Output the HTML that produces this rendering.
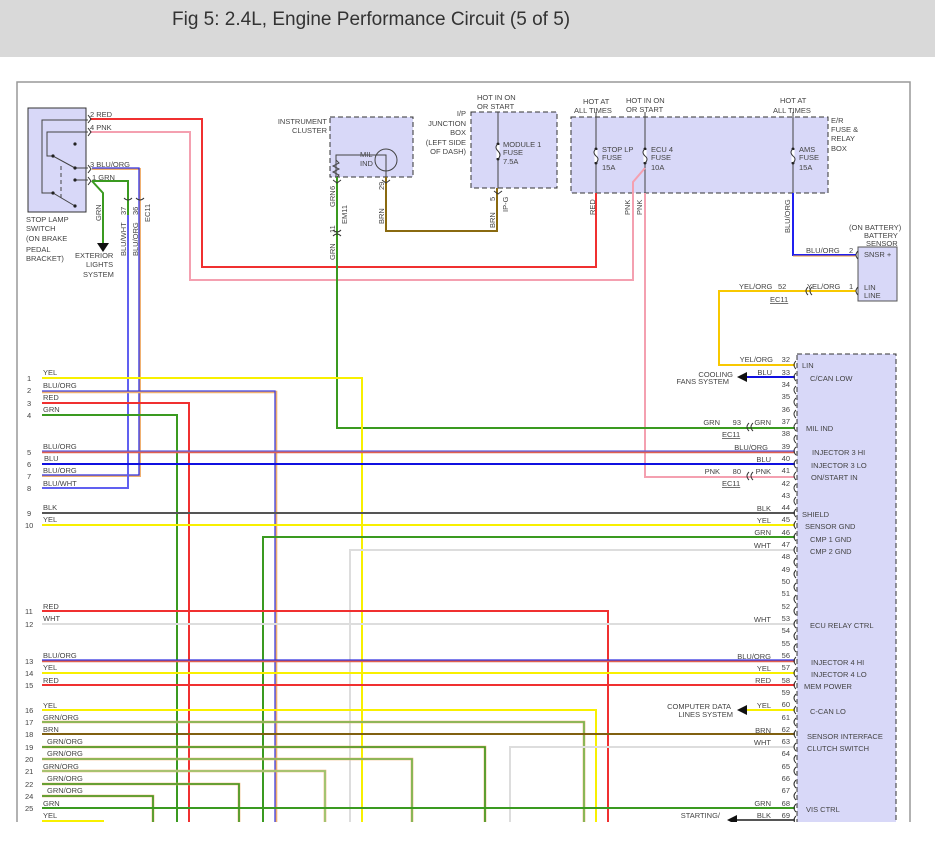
<!DOCTYPE html>
<html><head><meta charset="utf-8"><style>
html,body{margin:0;padding:0;background:#fff;width:935px;height:844px;overflow:hidden}
.hdr{position:absolute;left:0;top:0;width:935px;height:57px;background:#d9d9d9}
.hdr span{position:absolute;left:172px;top:9px;font:19px "Liberation Sans",sans-serif;color:#333}
svg{position:absolute;left:0;top:0}
text{font-family:"Liberation Sans",sans-serif;font-size:7.5px;fill:#444}
.r{text-anchor:end}
</style></head><body>
<div class="hdr"><span>Fig 5: 2.4L, Engine Performance Circuit (5 of 5)</span></div>
<svg width="935" height="844" viewBox="0 0 935 844">
<defs><clipPath id="c"><rect x="0" y="57" width="935" height="765"/></clipPath></defs>
<g clip-path="url(#c)">
<path d="M17,840 V82 H910 V840" fill="none" stroke="#999" stroke-width="1.5"/>
<rect x="28" y="108" width="58" height="104" fill="#d8d8f8" stroke="#333"/>
<rect x="330" y="117" width="83" height="60" fill="#d8d8f8" stroke="#333" stroke-dasharray="5,3"/>
<rect x="471" y="112" width="86" height="76" fill="#d8d8f8" stroke="#333" stroke-dasharray="5,3"/>
<rect x="571" y="117" width="257" height="76" fill="#d8d8f8" stroke="#333" stroke-dasharray="5,3"/>
<rect x="858" y="247" width="39" height="54" fill="#d8d8f8" stroke="#555"/>
<rect x="797" y="354" width="99" height="480" fill="#d8d8f8" stroke="#333" stroke-dasharray="5,3"/>
<g fill="none" stroke="#444" stroke-width="1">
<path d="M88,120 H42 V193 H53 L75,206"/><path d="M88,132 H47 V156 H53 L75,168"/>
<path d="M61,166 V200" stroke-dasharray="4,3"/>
<path d="M76,180 H88"/><path d="M76,168 H88"/>
<path d="M336,177 V155 H386 V177"/><path d="M336,160 l3,3 -6,3 6,3 -6,3 6,3 -3,3"/>
<circle cx="386" cy="160" r="11"/>
<path d="M498,112 V188 M596,112 V193 M645,112 V193 M793,112 V193"/>
</g>
<g fill="#222"><circle cx="75" cy="144" r="1.6"/><circle cx="53" cy="156" r="1.6"/><circle cx="75" cy="168" r="1.6"/><circle cx="75" cy="180" r="1.6"/><circle cx="53" cy="193" r="1.6"/><circle cx="75" cy="206" r="1.6"/>
<circle cx="596" cy="149" r="1.5"/><circle cx="596" cy="163" r="1.5"/><circle cx="645" cy="149" r="1.5"/><circle cx="645" cy="163" r="1.5"/><circle cx="793" cy="149" r="1.5"/><circle cx="793" cy="163" r="1.5"/><circle cx="498" cy="144" r="1.5"/><circle cx="498" cy="159" r="1.5"/></g>
<g fill="none" stroke="#fff" stroke-width="3"><path d="M596,150 V162 M645,150 V162 M793,150 V162 M498,145 V158"/></g>
<g fill="none" stroke="#333" stroke-width="1"><path d="M596,149 q-4,3 0,7 q4,3 0,7 M645,149 q-4,3 0,7 q4,3 0,7 M793,149 q-4,3 0,7 q4,3 0,7 M498,144 q-4,3 0,7 q4,4 0,8"/></g>
<g fill="none" stroke-width="2">
<path d="M90,119 H202 V267 H596 V193" stroke="#f03030"/>
<path d="M90,132 H190 V280 H633 V182 L645,168" stroke="#f4a0b0"/>
<path d="M645,193 V477 H795" stroke="#f4a0b0"/>
<path d="M386,177 V231 H497 V188" stroke="#8a6a10"/>
<path d="M337,177 V428 H795" stroke="#3a9a20"/>
<path d="M92,169 H140 V476 H42" stroke="#f0b070"/>
<path d="M92,168 H139 V475 H42" stroke="#3030e0" stroke-width="1.3"/>
<path d="M92,181 H128 V488 H42" stroke="#3a9a20"/>
<path d="M128,215 V488 H42" stroke="#6060f0"/>
<path d="M92,181 L103,193 V243" stroke="#3a9a20"/>
<path d="M793,193 V255 H856" stroke="#2020f0"/>
<path d="M793,256 H856" stroke="#f0a040" stroke-width="1"/>
<path d="M856,291 H719 V365 H795" stroke="#f8c800"/>
</g>
<path d="M97,243 h12 l-6,9z" fill="#111"/>
<g fill="none" stroke-width="2">
<path d="M42,378 H362 V900" stroke="#f8f000"/>
<path d="M42,392 H276 V900" stroke="#f0b070" stroke-width="2.6"/>
<path d="M42,391 H275 V900" stroke="#4040e0" stroke-width="1.3"/>
<path d="M42,403 H189 V900" stroke="#f03030"/>
<path d="M42,415 H177 V900" stroke="#3a9a20"/>
<path d="M42,452 H795" stroke="#e06050" stroke-width="2.6"/><path d="M42,451 H795" stroke="#6060e0" stroke-width="1.2"/>
<path d="M42,464 H795" stroke="#1010e0"/>
<path d="M42,513 H795" stroke="#555"/>
<path d="M42,525 H795" stroke="#f8f000"/>
<path d="M795,537 H263 V900" stroke="#3a9a20"/>
<path d="M795,550 H350 V900" stroke="#ddd"/>
<path d="M42,611 H608 V900" stroke="#f03030"/>
<path d="M42,624 H795" stroke="#ddd"/>
<path d="M42,661 H795" stroke="#e06050" stroke-width="2.6"/><path d="M42,660 H795" stroke="#3030e0" stroke-width="1.2"/>
<path d="M42,673 H795" stroke="#f8f000"/>
<path d="M42,685 H795" stroke="#f03030"/>
<path d="M42,710 H596 V900" stroke="#f8f000"/>
<g stroke="#f0b070" stroke-width="2.6">
<path d="M42,722 H584 V900"/><path d="M42,747 H485 V900"/><path d="M42,759 H412 V900"/><path d="M42,771 H325 V900"/><path d="M42,784 H239 V900"/><path d="M42,796 H153 V900"/></g>
<g stroke-width="1.6">
<path d="M42,722 H584 V900" stroke="#70b850"/><path d="M42,747 H485 V900" stroke="#3a9a20"/><path d="M42,759 H412 V900" stroke="#70b850"/><path d="M42,771 H325 V900" stroke="#90c870"/><path d="M42,784 H239 V900" stroke="#3a9a20"/><path d="M42,796 H153 V900" stroke="#3a9a20"/></g>
<path d="M42,734 H795" stroke="#806010"/>
<path d="M795,747 H510 V900" stroke="#ddd"/>
<path d="M42,808 H795" stroke="#3a9a20"/>
<path d="M42,821 H104" stroke="#f8f000"/>
<path d="M795,377 H745" stroke="#1010e0"/>
<path d="M795,710 H745" stroke="#f8f000"/>
<path d="M795,820 H735" stroke="#555"/>
</g>
<path d="M737,377 l10,-5 v10z M737,710 l10,-5 v10z M727,820 l10,-5 v10z" fill="#111"/>
<g fill="none" stroke="#333" stroke-width="1">
<path d="M796,361 q-4,4 0,8 M796,373 q-4,4 0,8 M796,386 q-4,4 0,8 M796,398 q-4,4 0,8 M796,410 q-4,4 0,8 M796,423 q-4,4 0,8 M796,435 q-4,4 0,8 M796,447 q-4,4 0,8 M796,460 q-4,4 0,8 M796,472 q-4,4 0,8 M796,484 q-4,4 0,8 M796,497 q-4,4 0,8 M796,509 q-4,4 0,8 M796,521 q-4,4 0,8 M796,533 q-4,4 0,8 M796,546 q-4,4 0,8 M796,558 q-4,4 0,8 M796,570 q-4,4 0,8 M796,583 q-4,4 0,8 M796,595 q-4,4 0,8 M796,607 q-4,4 0,8 M796,620 q-4,4 0,8 M796,632 q-4,4 0,8 M796,644 q-4,4 0,8 M796,657 q-4,4 0,8 M796,669 q-4,4 0,8 M796,681 q-4,4 0,8 M796,694 q-4,4 0,8 M796,706 q-4,4 0,8 M796,718 q-4,4 0,8 M796,730 q-4,4 0,8 M796,743 q-4,4 0,8 M796,755 q-4,4 0,8 M796,767 q-4,4 0,8 M796,780 q-4,4 0,8 M796,792 q-4,4 0,8 M796,804 q-4,4 0,8 M796,816 q-4,4 0,8"/>
<path d="M749,423 q-4,4 0,8 M753,423 q-4,4 0,8 M749,472 q-4,4 0,8 M753,472 q-4,4 0,8 M808,287 q-4,4 0,8 M812,287 q-4,4 0,8 M858,251 q-4,4 0,8 M858,287 q-4,4 0,8"/>
<path d="M88,115 l3,4 -3,4 M88,128 l3,4 -3,4 M88,165 l3,4 -3,4 M88,177 l3,4 -3,4 M124,198 q4,4 8,0 M136,198 q4,4 8,0 M333,180 l4,3 4,-3 M382,180 l4,3 4,-3 M494,191 l4,3 4,-3 M333,230 q4,4 8,0 M333,236 q4,-4 8,0"/>
</g>
</g>
<text x="90" y="117">2  RED</text><text x="90" y="130">4  PNK</text><text x="90" y="167">3  BLU/ORG</text><text x="92" y="180">1  GRN</text>
<text x="26" y="222">STOP LAMP</text><text x="26" y="231">SWITCH</text><text x="26" y="241">(ON BRAKE</text><text x="26" y="252">PEDAL</text><text x="26" y="261">BRACKET)</text>
<text x="75" y="258">EXTERIOR</text><text x="86" y="267">LIGHTS</text><text x="83" y="277">SYSTEM</text>
<g transform="rotate(-90)"><text x="-221" y="101">GRN</text><text x="-215" y="126">37</text><text x="-215" y="138">36</text><text x="-222" y="150">EC11</text><text x="-256" y="126">BLU/WHT</text><text x="-256" y="138">BLU/ORG</text>
<text x="-190" y="335">6</text><text x="-207" y="335">GRN</text><text x="-224" y="347">EM11</text><text x="-233" y="335">11</text><text x="-260" y="335">GRN</text>
<text x="-190" y="384">29</text><text x="-224" y="384">BRN</text><text x="-228" y="495">BRN</text><text x="-201" y="495">5</text><text x="-212" y="508">IP-G</text>
<text x="-215" y="595">RED</text><text x="-215" y="630">PNK</text><text x="-215" y="642">PNK</text><text x="-233" y="790">BLU/ORG</text></g>
<text class="r" x="327" y="124">INSTRUMENT</text><text class="r" x="327" y="133">CLUSTER</text><text x="360" y="157">MIL</text><text x="360" y="166">IND</text>
<text class="r" x="466" y="116">I/P</text><text class="r" x="466" y="126">JUNCTION</text><text class="r" x="466" y="135">BOX</text><text class="r" x="466" y="145">(LEFT SIDE</text><text class="r" x="466" y="154">OF DASH)</text>
<text x="477" y="100">HOT IN ON</text><text x="477" y="109">OR START</text><text x="503" y="147">MODULE 1</text><text x="503" y="155">FUSE</text><text x="503" y="164">7.5A</text>
<text x="583" y="104">HOT AT</text><text x="574" y="113">ALL TIMES</text><text x="626" y="103">HOT IN ON</text><text x="626" y="112">OR START</text><text x="780" y="103">HOT AT</text><text x="773" y="113">ALL TIMES</text>
<text x="602" y="152">STOP LP</text><text x="602" y="160">FUSE</text><text x="602" y="170">15A</text><text x="651" y="152">ECU 4</text><text x="651" y="160">FUSE</text><text x="651" y="170">10A</text><text x="799" y="152">AMS</text><text x="799" y="160">FUSE</text><text x="799" y="170">15A</text>
<text x="831" y="123">E/R</text><text x="831" y="132">FUSE &amp;</text><text x="831" y="141">RELAY</text><text x="831" y="151">BOX</text>
<text x="849" y="230">(ON BATTERY)</text><text x="864" y="238">BATTERY</text><text x="866" y="246">SENSOR</text>
<text x="806" y="253">BLU/ORG</text><text x="849" y="253">2</text><text x="864" y="257">SNSR +</text>
<text x="739" y="289">YEL/ORG</text><text x="778" y="289">52</text><text x="807" y="289">YEL/ORG</text><text x="849" y="289">1</text><text x="864" y="290">LIN</text><text x="864" y="298">LINE</text>
<text x="770" y="302" text-decoration="underline">EC11</text>
<text class="r" x="773" y="362">YEL/ORG</text><text class="r" x="772" y="375">BLU</text><text class="r" x="733" y="377">COOLING</text><text class="r" x="729" y="384">FANS SYSTEM</text>
<text class="r" x="720" y="425">GRN</text><text class="r" x="741" y="425">93</text><text class="r" x="771" y="425">GRN</text><text x="722" y="437" text-decoration="underline">EC11</text>
<text class="r" x="768" y="450">BLU/ORG</text><text class="r" x="771" y="462">BLU</text><text class="r" x="720" y="474">PNK</text><text class="r" x="741" y="474">80</text><text class="r" x="771" y="474">PNK</text><text x="722" y="486" text-decoration="underline">EC11</text>
<text class="r" x="771" y="511">BLK</text><text class="r" x="771" y="523">YEL</text><text class="r" x="771" y="535">GRN</text><text class="r" x="771" y="548">WHT</text><text class="r" x="771" y="622">WHT</text>
<text class="r" x="771" y="659">BLU/ORG</text><text class="r" x="771" y="671">YEL</text><text class="r" x="771" y="683">RED</text><text class="r" x="771" y="708">YEL</text>
<text class="r" x="731" y="709">COMPUTER DATA</text><text class="r" x="733" y="717">LINES SYSTEM</text><text class="r" x="771" y="733">BRN</text><text class="r" x="771" y="745">WHT</text><text class="r" x="771" y="806">GRN</text><text class="r" x="771" y="818">BLK</text><text class="r" x="720" y="818">STARTING/</text>
<g><text class="r" x="790" y="362">32</text><text class="r" x="790" y="375">33</text><text class="r" x="790" y="387">34</text><text class="r" x="790" y="399">35</text><text class="r" x="790" y="412">36</text><text class="r" x="790" y="424">37</text><text class="r" x="790" y="436">38</text><text class="r" x="790" y="449">39</text><text class="r" x="790" y="461">40</text><text class="r" x="790" y="473">41</text><text class="r" x="790" y="486">42</text><text class="r" x="790" y="498">43</text><text class="r" x="790" y="510">44</text><text class="r" x="790" y="522">45</text><text class="r" x="790" y="535">46</text><text class="r" x="790" y="547">47</text><text class="r" x="790" y="559">48</text><text class="r" x="790" y="572">49</text><text class="r" x="790" y="584">50</text><text class="r" x="790" y="596">51</text><text class="r" x="790" y="609">52</text><text class="r" x="790" y="621">53</text><text class="r" x="790" y="633">54</text><text class="r" x="790" y="646">55</text><text class="r" x="790" y="658">56</text><text class="r" x="790" y="670">57</text><text class="r" x="790" y="683">58</text><text class="r" x="790" y="695">59</text><text class="r" x="790" y="707">60</text><text class="r" x="790" y="720">61</text><text class="r" x="790" y="732">62</text><text class="r" x="790" y="744">63</text><text class="r" x="790" y="756">64</text><text class="r" x="790" y="769">65</text><text class="r" x="790" y="781">66</text><text class="r" x="790" y="793">67</text><text class="r" x="790" y="806">68</text><text class="r" x="790" y="818">69</text></g>
<text x="802" y="368">LIN</text><text x="810" y="381">C/CAN LOW</text><text x="806" y="431">MIL IND</text><text x="812" y="455">INJECTOR 3 HI</text><text x="811" y="468">INJECTOR 3 LO</text><text x="811" y="480">ON/START IN</text>
<text x="802" y="517">SHIELD</text><text x="805" y="529">SENSOR GND</text><text x="810" y="542">CMP 1 GND</text><text x="810" y="554">CMP 2 GND</text><text x="810" y="628">ECU RELAY CTRL</text>
<text x="811" y="665">INJECTOR 4 HI</text><text x="811" y="677">INJECTOR 4 LO</text><text x="804" y="689">MEM POWER</text><text x="810" y="714">C-CAN LO</text><text x="807" y="739">SENSOR INTERFACE</text><text x="807" y="751">CLUTCH SWITCH</text><text x="806" y="812">VIS CTRL</text>
<g><text x="27" y="381">1</text><text x="27" y="393">2</text><text x="27" y="406">3</text><text x="27" y="418">4</text><text x="27" y="455">5</text><text x="27" y="467">6</text><text x="27" y="479">7</text><text x="27" y="491">8</text><text x="27" y="516">9</text><text x="25" y="528">10</text><text x="25" y="614">11</text><text x="25" y="627">12</text><text x="25" y="664">13</text><text x="25" y="676">14</text><text x="25" y="688">15</text><text x="25" y="713">16</text><text x="25" y="725">17</text><text x="25" y="737">18</text><text x="25" y="750">19</text><text x="25" y="762">20</text><text x="25" y="774">21</text><text x="25" y="787">22</text><text x="25" y="799">24</text><text x="25" y="811">25</text></g>
<text x="43" y="375">YEL</text><text x="43" y="388">BLU/ORG</text><text x="43" y="400">RED</text><text x="43" y="412">GRN</text><text x="43" y="449">BLU/ORG</text><text x="44" y="461">BLU</text><text x="43" y="473">BLU/ORG</text><text x="43" y="486">BLU/WHT</text>
<text x="43" y="510">BLK</text><text x="43" y="522">YEL</text><text x="43" y="609">RED</text><text x="43" y="621">WHT</text><text x="43" y="658">BLU/ORG</text><text x="43" y="670">YEL</text><text x="43" y="683">RED</text>
<text x="43" y="708">YEL</text><text x="43" y="720">GRN/ORG</text><text x="43" y="732">BRN</text><text x="47" y="744">GRN/ORG</text><text x="47" y="756">GRN/ORG</text><text x="43" y="769">GRN/ORG</text><text x="47" y="781">GRN/ORG</text><text x="47" y="793">GRN/ORG</text><text x="43" y="806">GRN</text><text x="43" y="818">YEL</text>
</svg>
</body></html>
